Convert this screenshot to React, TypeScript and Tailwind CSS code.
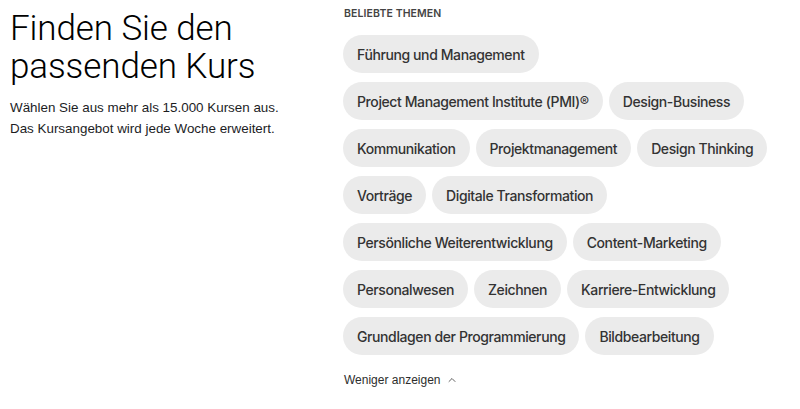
import { ChevronUp } from "lucide-react";

const TOPICS = [
  "Führung und Management",
  "Project Management Institute (PMI)®",
  "Design-Business",
  "Kommunikation",
  "Projektmanagement",
  "Design Thinking",
  "Vorträge",
  "Digitale Transformation",
  "Persönliche Weiterentwicklung",
  "Content-Marketing",
  "Personalwesen",
  "Zeichnen",
  "Karriere-Entwicklung",
  "Grundlagen der Programmierung",
  "Bildbearbeitung",
];

const App = () => {
  return (
    <div className="flex min-h-[409px] w-full bg-white font-['Liberation_Sans',Arial,sans-serif] text-[#1c1d1f]">
      <div className="w-[343px] shrink-0 pl-[10px] pt-[10px]">
        <h1 className="font-['Roboto',sans-serif] text-[35px] font-light leading-[38px] tracking-[-0.1px] text-black">
          Finden Sie den
          <br />
          passenden Kurs
        </h1>
        <p className="mt-[11px] text-[13.4px] leading-[21px]">
          Wählen Sie aus mehr als 15.000 Kursen aus.
          <br />
          Das Kursangebot wird jede Woche erweitert.
        </p>
      </div>

      <div className="flex-1 pr-[22px] pt-[8px]">
        <div className="pl-[1px] font-['Inter',sans-serif] text-[10.5px] font-semibold uppercase leading-[12px] tracking-[0.1px] text-[#444]">
          Beliebte Themen
        </div>
        <div className="mt-[15px] flex flex-wrap gap-x-[6px] gap-y-[9px]">
          {TOPICS.map((topic) => (
            <span
              key={topic}
              className="flex h-[38px] items-center rounded-full bg-[#ebebeb] px-[14px] font-['Inter',sans-serif] text-[14px] font-medium tracking-[-0.4px] text-[#333]"
            >
              {topic}
            </span>
          ))}
        </div>
        <button className="mt-[16px] flex items-center gap-[5px] pl-[1px] text-[12px] text-[#2d2d2d]">
          Weniger anzeigen
          <ChevronUp size={12} strokeWidth={1.5} />
        </button>
      </div>
    </div>
  );
};

export default App;
